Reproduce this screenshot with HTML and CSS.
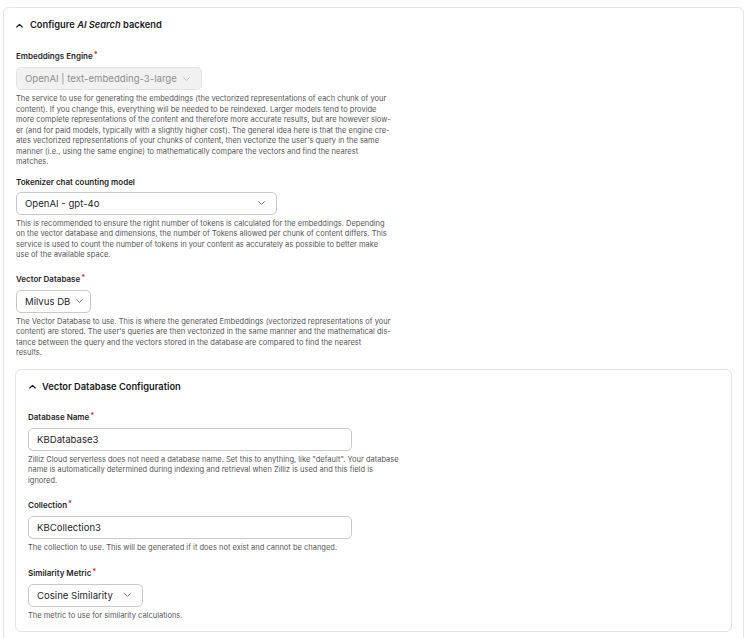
FILE: index.html
```html
<!DOCTYPE html>
<html lang="en">
<head>
<meta charset="utf-8">
<title>Configure AI Search backend</title>
<link rel="stylesheet" href="styles.css">
</head>
<body>
<section class="card card-outer">
  <div class="card-head">
    <svg class="chev-up" viewBox="0 0 7 5" width="7" height="5"><path d="M0.8 4L3.5 1.3L6.2 4" fill="none" stroke="#1f1f1f" stroke-width="1.2" stroke-linecap="round" stroke-linejoin="round"/></svg>
    <span class="head-title">Configure <em>AI Search</em> backend</span>
  </div>
  <div class="card-body card-body-outer">
    <div class="field">
      <div class="label">Embeddings Engine<span class="req">*</span></div>
      <div class="select select-disabled w-embed">
        <span class="select-value">OpenAI | text-embedding-3-large</span>
        <svg class="chev-down" viewBox="0 0 7 4" width="7" height="4"><path d="M0.6 0.6L3.5 3.4L6.4 0.6" fill="none" stroke="#b3b3b3" stroke-width="0.8" stroke-linecap="round" stroke-linejoin="round"/></svg>
      </div>
      <p class="desc">The service to use for generating the embeddings (the vectorized representations of each chunk of your<br>content). If you change this, everything will be needed to be reindexed. Larger models tend to provide<br>more complete representations of the content and therefore more accurate results, but are however slow-<br>er (and for paid models, typically with a slightly higher cost). The general idea here is that the engine cre-<br>ates vectorized representations of your chunks of content, then vectorize the user's query in the same<br>manner (i.e., using the same engine) to mathematically compare the vectors and find the nearest<br>matches.</p>
    </div>
    <div class="field field-tight">
      <div class="label">Tokenizer chat counting model</div>
      <div class="select w-token">
        <span class="select-value">OpenAI - gpt-4o</span>
        <svg class="chev-down" viewBox="0 0 7 4" width="7" height="4"><path d="M0.6 0.6L3.5 3.4L6.4 0.6" fill="none" stroke="#555" stroke-width="0.8" stroke-linecap="round" stroke-linejoin="round"/></svg>
      </div>
      <p class="desc">This is recommended to ensure the right number of tokens is calculated for the embeddings. Depending<br>on the vector database and dimensions, the number of Tokens allowed per chunk of content differs. This<br>service is used to count the number of tokens in your content as accurately as possible to better make<br>use of the available space.</p>
    </div>
    <div class="field">
      <div class="label">Vector Database<span class="req">*</span></div>
      <div class="select w-vdb">
        <span class="select-value">Milvus DB</span>
        <svg class="chev-down" viewBox="0 0 7 4" width="7" height="4"><path d="M0.6 0.6L3.5 3.4L6.4 0.6" fill="none" stroke="#555" stroke-width="0.8" stroke-linecap="round" stroke-linejoin="round"/></svg>
      </div>
      <p class="desc">The Vector Database to use. This is where the generated Embeddings (vectorized representations of your<br>content) are stored. The user's queries are then vectorized in the same manner and the mathematical dis-<br>tance between the query and the vectors stored in the database are compared to find the nearest<br>results.</p>
    </div>

    <section class="card card-inner">
      <div class="card-head">
        <svg class="chev-up" viewBox="0 0 7 5" width="7" height="5"><path d="M0.8 4L3.5 1.3L6.2 4" fill="none" stroke="#1f1f1f" stroke-width="1.2" stroke-linecap="round" stroke-linejoin="round"/></svg>
        <span class="head-title">Vector Database Configuration</span>
      </div>
      <div class="card-body card-body-inner">
        <div class="field">
          <div class="label">Database Name<span class="req">*</span></div>
          <div class="input w-input">KBDatabase3</div>
          <p class="desc">Zilliz Cloud serverless does not need a database name. Set this to anything, like "default". Your database<br>name is automatically determined during indexing and retrieval when Zilliz is used and this field is<br>ignored.</p>
        </div>
        <div class="field">
          <div class="label">Collection<span class="req">*</span></div>
          <div class="input w-input">KBCollection3</div>
          <p class="desc">The collection to use. This will be generated if it does not exist and cannot be changed.</p>
        </div>
        <div class="field">
          <div class="label">Similarity Metric<span class="req">*</span></div>
          <div class="select w-sim">
            <span class="select-value">Cosine Similarity</span>
            <svg class="chev-down" viewBox="0 0 7 4" width="7" height="4"><path d="M0.6 0.6L3.5 3.4L6.4 0.6" fill="none" stroke="#555" stroke-width="0.8" stroke-linecap="round" stroke-linejoin="round"/></svg>
          </div>
          <p class="desc">The metric to use for similarity calculations.</p>
        </div>
      </div>
    </section>
  </div>
</section>
</body>
</html>
```
FILE: styles.css
```css
* { box-sizing: border-box; }
html, body { background: #ffffff; }
body {
  margin: 0;
  padding: 7px 6px 0 3px;
  font-family: Inter, "Noto Sans", "Liberation Sans", sans-serif;
  color: #1f1f1f;
  overflow: hidden;
}
.card {
  border: 1px solid #e4e4e4;
  border-radius: 6px;
  background: #fff;
}
.card-outer {
  padding: 0 11px 40px 11px;
}
.card-inner {
  padding: 0 12px 10px 12px;
}
.card-head {
  display: flex;
  align-items: center;
  padding-top: 10px;
  height: 24px;
  font-size: 9.3px;
  line-height: 14px;
  font-weight: 600;
  color: #1a1a1a;
}
.card-outer > .card-head { padding-left: 1px; gap: 7px; }
.card-inner > .card-head { padding-left: 1px; gap: 6px; padding-top: 10px; height: 24px; }
.chev-up { display: block; flex: none; }
.head-title em { font-style: italic; }
.card-body {
  display: flex;
  flex-direction: column;
  padding-top: 18px;
}
.card-body-outer { gap: 10px; }
.card-body-outer > .field { padding-left: 1px; }
.card-body-outer > .field-tight { margin-top: -2px; margin-bottom: 2px; }
.card-body-inner { gap: 13px; padding-top: 17px; }
.field {
  display: flex;
  flex-direction: column;
  align-items: flex-start;
}
.label {
  font-size: 8px;
  line-height: 12px;
  font-weight: 600;
  color: #262626;
  margin-bottom: 4px;
}
.req {
  color: #e0191d;
  margin-left: 1px;
  font-size: 7.5px;
  position: relative;
  top: -2px;
}
.select, .input {
  height: 23px;
  border: 1px solid #c9c9c9;
  border-radius: 5px;
  display: flex;
  align-items: center;
  padding: 0 8px 0 8px;
  font-size: 9.6px;
  color: #1f1f1f;
  background: #fff;
}
.select { justify-content: space-between; }
.select-disabled {
  background: #f1f1f1;
  border-color: #e2e2e2;
  color: #8e8e8e;
}
.chev-down { display: block; flex: none; margin-right: 3px; }
.w-embed { width: 186px; }
.w-token { width: 261px; }
.w-vdb { width: 75px; padding-right: 6px; }
.w-vdb .chev-down { margin-right: 1px; }
.w-input { width: 324px; }
.w-sim { width: 115px; }
.desc {
  margin: 4px 0 0 0;
  font-size: 7.5px;
  line-height: 10.5px;
  color: #555555;
  white-space: nowrap;
}
```
